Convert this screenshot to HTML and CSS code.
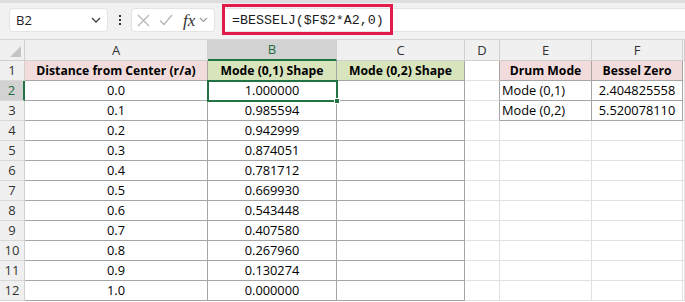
FILE: index.html
```html
<!DOCTYPE html>
<html lang="en">
<head>
  <meta charset="UTF-8">
  <title>BESSELJ</title>
  <link rel="stylesheet" href="styles.css">
</head>
<body>

  <!-- formula bar -->
  <div class="toolbar">
    <div class="name-box">
      <span>B2</span>
      <svg width="10" height="6" viewBox="0 0 10 6"><path d="M1 1 L5 5 L9 1" fill="none" stroke="#444" stroke-width="1.3"/></svg>
    </div>
    <div class="dots">
      <span></span><span></span><span></span>
    </div>
    <div class="fx-box">
      <svg width="13" height="13" viewBox="0 0 13 13"><path d="M1 1 L12 12 M12 1 L1 12" stroke="#b4b4b4" stroke-width="1.2"/></svg>
      <svg width="14" height="12" viewBox="0 0 14 12"><path d="M1 6.5 L5 10.5 L13 1" fill="none" stroke="#b4b4b4" stroke-width="1.2"/></svg>
      <span class="fx">fx</span>
      <svg width="9" height="6" viewBox="0 0 9 6"><path d="M1 1 L4.5 4.5 L8 1" fill="none" stroke="#9a9a9a" stroke-width="1.2"/></svg>
    </div>
    <div class="formula">
      <span class="formula-text">=BESSELJ($F$2*A2,0)</span>
      <div class="highlight"></div>
    </div>
  </div>

  <!-- grid -->
  <table class="sheet">
    <colgroup>
      <col class="c-row"><col class="c-a"><col class="c-b"><col class="c-c"><col class="c-d"><col class="c-e"><col class="c-f"><col class="c-x">
    </colgroup>
    <tr class="heads">
      <td class="corner"><div class="tri"></div></td>
      <td>A</td><td class="sel-col">B</td><td>C</td><td>D</td><td>E</td><td>F</td><td></td>
    </tr>
    <tr>
      <td class="rn">1</td>
      <td class="b pink bold">Distance from Center (r/a)</td>
      <td class="b green bold">Mode (0,1) Shape</td>
      <td class="b green bold">Mode (0,2) Shape</td>
      <td class="dr"></td>
      <td class="b pink bold">Drum Mode</td>
      <td class="b pink bold">Bessel Zero</td>
      <td></td>
    </tr>
    <tr>
      <td class="rn sel-row">2</td>
      <td class="b">0.0</td>
      <td class="b active">1.000000<div class="handle"></div></td>
      <td class="b"></td>
      <td class="dr"></td>
      <td class="b left">Mode (0,1)</td>
      <td class="b">2.404825558</td>
      <td></td>
    </tr>
    <tr>
      <td class="rn">3</td>
      <td class="b">0.1</td><td class="b">0.985594</td><td class="b"></td>
      <td class="dr"></td>
      <td class="b left">Mode (0,2)</td>
      <td class="b">5.520078110</td>
      <td></td>
    </tr>
    <tr><td class="rn">4</td><td class="b">0.2</td><td class="b">0.942999</td><td class="b"></td><td></td><td></td><td></td><td></td></tr>
    <tr><td class="rn">5</td><td class="b">0.3</td><td class="b">0.874051</td><td class="b"></td><td></td><td></td><td></td><td></td></tr>
    <tr><td class="rn">6</td><td class="b">0.4</td><td class="b">0.781712</td><td class="b"></td><td></td><td></td><td></td><td></td></tr>
    <tr><td class="rn">7</td><td class="b">0.5</td><td class="b">0.669930</td><td class="b"></td><td></td><td></td><td></td><td></td></tr>
    <tr><td class="rn">8</td><td class="b">0.6</td><td class="b">0.543448</td><td class="b"></td><td></td><td></td><td></td><td></td></tr>
    <tr><td class="rn">9</td><td class="b">0.7</td><td class="b">0.407580</td><td class="b"></td><td></td><td></td><td></td><td></td></tr>
    <tr><td class="rn">10</td><td class="b">0.8</td><td class="b">0.267960</td><td class="b"></td><td></td><td></td><td></td><td></td></tr>
    <tr><td class="rn">11</td><td class="b">0.9</td><td class="b">0.130274</td><td class="b"></td><td></td><td></td><td></td><td></td></tr>
    <tr><td class="rn">12</td><td class="b">1.0</td><td class="b">0.000000</td><td class="b"></td><td></td><td></td><td></td><td></td></tr>
  </table>

</body>
</html>
```

FILE: styles.css
```css
* {
  margin: 0;
  padding: 0;
  box-sizing: border-box;
}

body {
  width: 685px;
  height: 302px;
  overflow: hidden;
  background: #fff;
  font-family: 'Open Sans', sans-serif;
  color: #000;
}

/* formula bar */
.toolbar {
  height: 40px;
  background: #f1f1f1;
  border-top: 3px solid #dddddd;
  border-bottom: 1px solid #d6d6d6;
  display: flex;
  align-items: center;
  padding-left: 9px;
}

.name-box {
  width: 99px;
  height: 24px;
  margin-top: -2px;
  background: #fff;
  border: 1px solid #e3e3e3;
  border-radius: 4px;
  display: flex;
  align-items: center;
  justify-content: space-between;
  padding: 0 6px 0 6px;
  font-size: 13px;
  color: #222;
}

.dots {
  width: 23px;
  display: flex;
  flex-direction: column;
  align-items: center;
  gap: 2px;
  margin-top: -2px;
}

.dots span {
  width: 2px;
  height: 2px;
  background: #333;
}

.fx-box {
  width: 84px;
  height: 24px;
  margin-top: -2px;
  background: #fff;
  border: 1px solid #e3e3e3;
  border-radius: 4px;
  display: flex;
  align-items: center;
  padding-left: 5px;
}

.fx-box svg:nth-child(2) {
  margin-left: 9px;
}

.fx {
  font-family: 'Liberation Serif', serif;
  font-style: italic;
  font-size: 17px;
  color: #333;
  margin-left: 10px;
  margin-right: 4px;
  line-height: 1;
}

.formula {
  flex: 1;
  height: 24px;
  margin-top: -2px;
  margin-left: 7px;
  background: #fff;
  border: 1px solid #e3e3e3;
  border-right: none;
  border-radius: 4px 0 0 4px;
  position: relative;
  display: flex;
  align-items: center;
  padding-left: 9px;
}

.formula-text {
  font-family: 'Liberation Mono', monospace;
  font-size: 13.3px;
  color: #1a1a1a;
}

.highlight {
  position: absolute;
  left: -1px;
  top: -5px;
  width: 171px;
  height: 31px;
  border: 3px solid #e31b4d;
}

/* grid */
.sheet {
  border-collapse: separate;
  border-spacing: 0;
  table-layout: fixed;
  width: 685px;
  font-size: 12.8px;
}

.c-row { width: 25px; }
.c-a { width: 183px; }
.c-b { width: 129px; }
.c-c { width: 128px; }
.c-d { width: 35px; }
.c-e { width: 92px; }
.c-f { width: 91px; }
.c-x { width: 2px; }

.sheet tr {
  height: 20px;
}

.sheet td {
  height: 20px;
  line-height: 19px;
  text-align: center;
  white-space: nowrap;
  overflow: hidden;
  border-right: 1px solid #e1e1e1;
  border-bottom: 1px solid #e1e1e1;
}

.heads td {
  background: #f0f0f0;
  border-right: 1px solid #d0d0d0;
  border-bottom: 1px solid #cfcfcf;
  font-size: 13px;
  color: #333;
}

.corner {
  position: relative;
}

.tri {
  position: absolute;
  right: 3px;
  bottom: 3px;
  width: 0;
  height: 0;
  border-left: 11px solid transparent;
  border-bottom: 11px solid #c4c4c4;
}

.heads .sel-col {
  background: #d2d2d2;
  color: #1d6b3f;
  border-bottom: 2px solid #217346;
}

.rn {
  background: #f0f0f0;
  color: #333;
  font-size: 13px;
  border-right-color: #d0d0d0 !important;
  border-bottom-color: #d8d8d8 !important;
}

.rn.sel-row {
  background: #d2d2d2;
  color: #1d6b3f;
  border-right: 2px solid #217346 !important;
}

.b {
  border-right-color: #a6a6a6 !important;
  border-bottom-color: #a6a6a6 !important;
}

.dr {
  border-right-color: #a6a6a6 !important;
}

.pink {
  background: #f2dcdb;
}

.green {
  background: #d8e4bc;
}

.bold {
  font-weight: bold;
  font-size: 12.2px;
}

.left {
  text-align: left !important;
  padding-left: 2px;
}

.active {
  position: relative;
  overflow: visible !important;
  outline: 2px solid #217346;
  outline-offset: -1px;
}

.handle {
  position: absolute;
  right: -4px;
  bottom: -4px;
  width: 6px;
  height: 6px;
  background: #217346;
  border: 1px solid #fff;
}
```
